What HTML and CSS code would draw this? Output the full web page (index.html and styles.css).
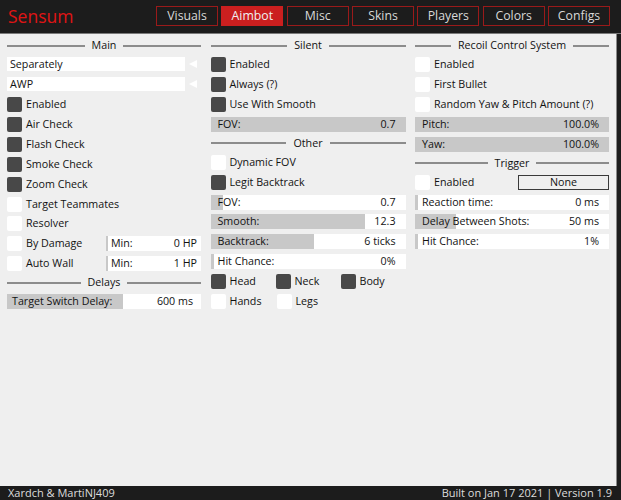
FILE: index.html
```html
<!DOCTYPE html>
<html>
<head>
<meta charset="utf-8">
<link rel="stylesheet" href="styles.css">
</head>
<body>
<header class="topbar">
  <div class="brand">Sensum</div>
  <nav class="tabs">
    <div class="tab">Visuals</div>
    <div class="tab active">Aimbot</div>
    <div class="tab">Misc</div>
    <div class="tab">Skins</div>
    <div class="tab">Players</div>
    <div class="tab">Colors</div>
    <div class="tab">Configs</div>
  </nav>
</header>
<main class="panel">
  <section class="col">
    <div class="sep"><span>Main</span></div>
    <div class="combo"><div class="combo-box">Separately</div><div class="arrow"></div></div>
    <div class="combo"><div class="combo-box">AWP</div><div class="arrow"></div></div>
    <label class="check on"><i></i>Enabled</label>
    <label class="check on"><i></i>Air Check</label>
    <label class="check on"><i></i>Flash Check</label>
    <label class="check on"><i></i>Smoke Check</label>
    <label class="check on"><i></i>Zoom Check</label>
    <label class="check"><i></i>Target Teammates</label>
    <label class="check"><i></i>Resolver</label>
    <div class="pair"><label class="check"><i></i>By Damage</label><div class="slider mini" style="--p:2px"><span>Min:</span><span>0 HP</span></div></div>
    <div class="pair"><label class="check"><i></i>Auto Wall</label><div class="slider mini" style="--p:2px"><span>Min:</span><span>1 HP</span></div></div>
    <div class="sep"><span>Delays</span></div>
    <div class="slider tsd" style="--p:60%"><span>Target Switch Delay:</span><span>600 ms</span></div>
  </section>
  <section class="col">
    <div class="sep"><span>Silent</span></div>
    <label class="check on"><i></i>Enabled</label>
    <label class="check on"><i></i>Always (?)</label>
    <label class="check on"><i></i>Use With Smooth</label>
    <div class="slider" style="--p:100%"><span>FOV:</span><span>0.7</span></div>
    <div class="sep"><span>Other</span></div>
    <label class="check"><i></i>Dynamic FOV</label>
    <label class="check on"><i></i>Legit Backtrack</label>
    <div class="slider" style="--p:6%"><span>FOV:</span><span>0.7</span></div>
    <div class="slider" style="--p:79%"><span>Smooth:</span><span>12.3</span></div>
    <div class="slider" style="--p:53%"><span>Backtrack:</span><span>6 ticks</span></div>
    <div class="slider" style="--p:3px"><span>Hit Chance:</span><span>0%</span></div>
    <div class="hitbox">
      <label class="check on"><i></i>Head</label>
      <label class="check on"><i></i>Neck</label>
      <label class="check on"><i></i>Body</label>
    </div>
    <div class="hitbox">
      <label class="check"><i></i>Hands</label>
      <label class="check"><i></i>Legs</label>
    </div>
  </section>
  <section class="col">
    <div class="sep"><span>Recoil Control System</span></div>
    <label class="check"><i></i>Enabled</label>
    <label class="check"><i></i>First Bullet</label>
    <label class="check"><i></i>Random Yaw &amp; Pitch Amount (?)</label>
    <div class="slider" style="--p:100%"><span>Pitch:</span><span>100.0%</span></div>
    <div class="slider" style="--p:100%"><span>Yaw:</span><span>100.0%</span></div>
    <div class="sep"><span>Trigger</span></div>
    <div class="trigger"><label class="check"><i></i>Enabled</label><div class="keybtn">None</div></div>
    <div class="slider" style="--p:3px"><span>Reaction time:</span><span>0 ms</span></div>
    <div class="slider" style="--p:21%"><span>Delay Between Shots:</span><span>50 ms</span></div>
    <div class="slider" style="--p:3px"><span>Hit Chance:</span><span>1%</span></div>
  </section>
</main>
<footer class="footer">
  <span>Xardch &amp; MartiNJ409</span>
  <span>Built on Jan 17 2021 | Version 1.9</span>
</footer>
</body>
</html>
```
FILE: styles.css
```css
* { box-sizing: border-box; }
html, body { margin: 0; padding: 0; }
body {
  width: 621px;
  height: 500px;
  background: #1c1c1c;
  font-family: "Open Sans", "Noto Sans", sans-serif;
  font-size: 10.7px;
  color: #121212;
  overflow: hidden;
}
.topbar {
  height: 34px;
  border-bottom: 1px solid #7a7a7a;
  display: flex;
  align-items: center;
  justify-content: space-between;
  padding: 0 11px 2px 8px;
}
.brand {
  color: #e01414;
  font-size: 17.5px;
  line-height: 20px;
}
.tabs {
  display: flex;
  gap: 3.33px;
}
.tab {
  width: 62px;
  height: 20px;
  border: 1px solid #9a1a1a;
  color: #d8d8d8;
  font-size: 12.3px;
  line-height: 18px;
  text-align: center;
}
.tab.active {
  background: #cb1f1f;
  border-color: #cb1f1f;
  color: #f0f0f0;
}
.panel {
  width: 617px;
  height: 452px;
  background: #efefef;
  border-right: 1px solid #8a8a8a;
  display: grid;
  grid-template-columns: 194px 195px 194px;
  column-gap: 9.5px;
  padding: 5px 0 0 7px;
  align-items: start;
}
.col {
  display: flex;
  flex-direction: column;
  gap: 4.95px;
}
.sep {
  height: 13px;
  display: flex;
  align-items: center;
  gap: 7px;
  line-height: 13px;
}
.sep::before, .sep::after {
  content: "";
  flex: 1;
  height: 2px;
  background: #8c8c8c;
}
.check {
  height: 15px;
  display: flex;
  align-items: center;
  gap: 4px;
  line-height: 15px;
  white-space: nowrap;
}
.check i {
  width: 15px;
  height: 15px;
  background: #fff;
  border-radius: 2px;
  flex: none;
}
.check.on i { background: #484848; }
.combo {
  height: 15px;
  display: flex;
  align-items: center;
}
.combo-box {
  width: 178px;
  height: 14px;
  background: #fff;
  padding-left: 3px;
  line-height: 14px;
}
.arrow {
  width: 0;
  height: 0;
  margin-left: 4px;
  border-top: 4.5px solid transparent;
  border-bottom: 4.5px solid transparent;
  border-right: 8px solid #fff;
}
.slider {
  height: 15px;
  display: flex;
  justify-content: space-between;
  padding: 0 10px 0 7px;
  line-height: 15px;
  background: linear-gradient(to right, #c8c8c8 var(--p), #fff var(--p));
  white-space: nowrap;
}
.slider.tsd { padding: 0 8px 0 5px; }
.pair {
  display: flex;
  align-items: center;
  justify-content: space-between;
}
.slider.mini {
  width: 95px;
  padding: 0 4px 0 5px;
}
.hitbox {
  display: flex;
}
.hitbox .check { width: 66px; }
.trigger {
  display: flex;
  justify-content: space-between;
  align-items: center;
}
.keybtn {
  width: 91px;
  height: 15px;
  border: 1px solid #3a3a3a;
  text-align: center;
  line-height: 13px;
}
.footer {
  height: 14px;
  display: flex;
  justify-content: space-between;
  padding: 0 9px 0 8px;
  color: #dcdcdc;
  font-size: 11px;
  line-height: 14px;
}
```
